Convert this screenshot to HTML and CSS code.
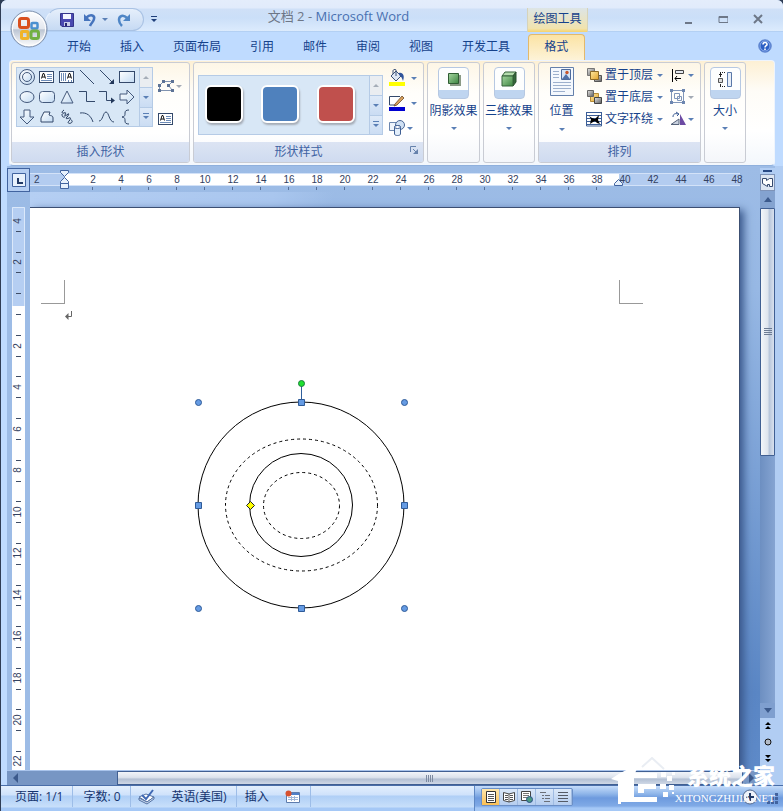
FILE: index.html
```
<!DOCTYPE html>
<html lang="zh-CN">
<head>
    <meta charset="UTF-8">
    <meta name="viewport" content="width=device-width, initial-scale=1.0">
    <title>文档 2 - Microsoft Word</title>
    <link rel="stylesheet" href="styles.css">
</head>
<body>
<svg class="defs" width="0" height="0" aria-hidden="true">
    <defs>
        <linearGradient id="shapeFill" x1="0" y1="0" x2="1" y2="1">
            <stop offset="0" stop-color="#fff"/><stop offset="1" stop-color="#c3dbf3"/>
        </linearGradient>
        <linearGradient id="green" x1="0" y1="0" x2="1" y2="1">
            <stop offset="0" stop-color="#a5d6a0"/><stop offset="1" stop-color="#3c8440"/>
        </linearGradient>
        <linearGradient id="gold" x1="0" y1="0" x2="1" y2="1">
            <stop offset="0" stop-color="#ffe9a0"/><stop offset="1" stop-color="#e2a32d"/>
        </linearGradient>
        <linearGradient id="gray" x1="0" y1="0" x2="1" y2="1">
            <stop offset="0" stop-color="#e6e6e6"/><stop offset="1" stop-color="#5c5c5c"/>
        </linearGradient>
        <linearGradient id="orb" x1="0" y1="0" x2="0" y2="1">
            <stop offset="0" stop-color="#fff"/><stop offset=".5" stop-color="#e3e7ee"/><stop offset=".52" stop-color="#bcc5d3"/><stop offset="1" stop-color="#fff"/>
        </linearGradient>
        <symbol id="textbox" viewBox="0 0 16 14">
            <rect x=".5" y="1.5" width="14" height="11" fill="#fff" stroke="#34496b"/>
            <path d="M2.500 8.500l1.500-5h1l1.500 5M3 7h3" fill="none" stroke="#111"/>
            <path d="M8 4.500h5M8 6.500h5M8 8.500h5M2 10.500h11" stroke="#6d8cb8"/>
        </symbol>
    </defs>
</svg>
<div class="window">
    <header class="titlebar">
        <button class="office-button" aria-label="Office">
            <svg width="38" height="38" viewBox="0 0 38 38">
                <circle cx="19" cy="19" r="18" fill="url(#orb)" stroke="#7c8fac"/>
                <circle cx="19" cy="19" r="16.500" fill="none" stroke="#fff"/>
                <g fill="none" stroke-width="3">
                    <rect x="9.500" y="8.500" width="9" height="9" rx="2" stroke="#d9501e"/>
                    <rect x="21.500" y="13" width="6" height="5.500" rx="1" stroke="#4a90d0" stroke-width="2.500"/>
                    <rect x="11.500" y="21.500" width="6.500" height="7" rx="1" stroke="#f0b429"/>
                    <rect x="21" y="21" width="7.500" height="7.500" rx="2" stroke="#72b043"/>
                </g>
            </svg>
        </button>
        <div class="quick-access">
            <button aria-label="保存">
                <svg width="14" height="14" viewBox="0 0 14 14"><path d="M.5.5h13v13H2l-1.500-1.500z" fill="#4a49b0" stroke="#34348a"/><path d="M3 1h8v5H3z" fill="#f4f6ff"/><path d="M4 9h6v4H4z" fill="#c9cdea"/><path d="M5 10h2v3H5z" fill="#26266e"/></svg>
            </button>
            <button class="undo" aria-label="撤消">
                <svg width="14" height="14" viewBox="0 0 14 14"><path d="M3 5c5-5 9-2 8 1-.5 3-3 4-4 7" fill="none" stroke="#4674bd" stroke-width="2.500"/><path d="M1 1v7h7z" fill="#4674bd"/></svg>
                <i class="caret"></i>
            </button>
            <button aria-label="恢复">
                <svg width="14" height="14" viewBox="0 0 14 14"><path d="M10 5c-4-4-8-2-8 2 0 2 1 4 3 6" fill="none" stroke="#4f86c6" stroke-width="2.500"/><path d="M13 1v7H6z" fill="#4f86c6"/></svg>
            </button>
        </div>
        <button class="customize" aria-label="自定义快速访问工具栏"><i class="caret bar dark"></i></button>
        <h1 class="window-title"><span>文档 2 -</span> Microsoft Word</h1>
        <div class="context-title">绘图工具</div>
        <div class="window-buttons">
            <button aria-label="最小化"><svg width="10" height="12"><path d="M2 10h7" stroke="#6d7787" stroke-width="2"/></svg></button>
            <button aria-label="最大化"><svg width="10" height="12"><path d="M1 3.500h9v6H1z" fill="none" stroke="#6d7787"/><path d="M1 4h9" stroke="#6d7787" stroke-width="2"/></svg></button>
            <button aria-label="关闭"><svg width="10" height="12"><path d="M1 2l8 8M9 2l-8 8" stroke="#6d7787" stroke-width="2"/></svg></button>
        </div>
    </header>

    <nav class="tabs">
        <a href="#">开始</a>
        <a href="#">插入</a>
        <a href="#">页面布局</a>
        <a href="#">引用</a>
        <a href="#">邮件</a>
        <a href="#">审阅</a>
        <a href="#">视图</a>
        <a href="#">开发工具</a>
        <a href="#" class="active">格式</a>
        <button class="help" aria-label="帮助">
            <svg width="14" height="14" viewBox="0 0 14 14"><circle cx="7" cy="7" r="6.300" fill="#2d5fc4" stroke="#6f92d4"/><circle cx="7" cy="7" r="5" fill="none" stroke="#bcd3fa" stroke-width=".7"/><path d="M5 5.500c0-3 4.200-2.500 4 0 0 1.200-2 1.300-2 3M7 9.500v1.500" fill="none" stroke="#fff" stroke-width="1.600"/></svg>
        </button>
    </nav>

    <div class="ribbon">
        <section class="group insert-shapes">
            <div class="group-body">
                <div class="gallery">
                    <div class="shape-grid">
                        <button aria-label="同心圆"><svg width="18" height="18"><g fill="url(#shapeFill)" stroke="#44597c"><circle cx="9" cy="9" r="7.500"/><circle cx="9" cy="9" r="4.500"/></g></svg></button>
                        <button aria-label="文本框"><svg width="16" height="14"><use href="#textbox"/></svg></button>
                        <button aria-label="竖排文本框"><svg width="16" height="14"><rect x=".5" y="1.500" width="14" height="11" fill="#fff" stroke="#34496b"/><path d="M8.500 8.500l1.500-5h1l1.500 5M9 7h3" fill="none" stroke="#111"/><path d="M2.500 3v8M4.500 3v8M6.500 3v8M9.500 10v2M12.500 10v2" stroke="#6d8cb8"/></svg></button>
                        <button aria-label="直线"><svg width="16" height="16"><path d="M1 1l14 14" stroke="#34496b"/></svg></button>
                        <button aria-label="箭头"><svg width="16" height="16"><path d="M1 1l13 13" stroke="#34496b"/><path d="M15 15h-5l5-5z" fill="#22375a"/></svg></button>
                        <button aria-label="矩形"><svg width="16" height="12"><rect x=".5" y=".5" width="15" height="11" fill="url(#shapeFill)" stroke="#34496b"/></svg></button>
                        <button aria-label="椭圆"><svg width="16" height="14"><ellipse cx="8" cy="7" rx="7" ry="5.500" fill="url(#shapeFill)" stroke="#44597c"/></svg></button>
                        <button aria-label="圆角矩形"><svg width="16" height="12"><rect x=".5" y=".5" width="15" height="11" rx="3" fill="url(#shapeFill)" stroke="#44597c"/></svg></button>
                        <button aria-label="三角形"><svg width="14" height="14"><path d="M7 1l6 12H1z" fill="url(#shapeFill)" stroke="#44597c"/></svg></button>
                        <button aria-label="肘形连接符"><svg width="16" height="14"><path d="M0 1.500h7.500v10H16" fill="none" stroke="#34496b"/></svg></button>
                        <button aria-label="肘形箭头"><svg width="16" height="14"><path d="M0 1.500h7.500v9H13" fill="none" stroke="#34496b"/><path d="M12 7.500l4 3-4 3z" fill="#22375a"/></svg></button>
                        <button aria-label="右箭头"><svg width="16" height="16"><path d="M1 5h7V1l7 7-7 7v-4H1z" fill="url(#shapeFill)" stroke="#44597c"/></svg></button>
                        <button aria-label="下箭头"><svg width="16" height="16"><path d="M5 1h6v7h4l-7 7-7-7h4z" fill="url(#shapeFill)" stroke="#44597c"/></svg></button>
                        <button aria-label="任意多边形"><svg width="16" height="14"><path d="M5 2h6l-1 3c1 1 4 0 4 3v4H2V8z" fill="url(#shapeFill)" stroke="#34496b"/></svg></button>
                        <button aria-label="自由曲线"><svg width="14" height="16"><path d="M4 1c-3 2-2 4 0 3s2 0 1 2 2 0 3-1 1 1-1 3 0 2 2 1 2 1 0 3 0 3 2 2 1-3 0-3M2 5c0 4 2 3 3 3" fill="none" stroke="#22375a"/></svg></button>
                        <button aria-label="弧形"><svg width="16" height="14"><path d="M1 3c7-1 11 3 13 9" fill="none" stroke="#34496b"/></svg></button>
                        <button aria-label="曲线"><svg width="16" height="14"><path d="M0 11c4 0 4-9 7-9s3 10 8 10" fill="none" stroke="#34496b"/></svg></button>
                        <button aria-label="左大括号"><svg width="14" height="16"><path d="M9 1C6 1 5 2 5 4c0 3 0 3-3 4 3 1 3 1 3 4 0 2 1 3 4 3" fill="none" stroke="#34496b"/></svg></button>
                    </div>
                    <div class="gallery-scroll">
                        <button disabled aria-label="上一行"><i class="caret up"></i></button>
                        <button aria-label="下一行"><i class="caret"></i></button>
                        <button aria-label="其他"><i class="caret bar"></i></button>
                    </div>
                </div>
                <div class="shape-tools">
                    <button aria-label="编辑形状"><svg width="16" height="14" viewBox="0 0 16 14"><path d="M1.500 11.500v-5l4-4h9l-4 4 4 5z" fill="none" stroke="#8093b0"/><path d="M0 10h3v3H0zM0 5h3v3H0zM4 1h3v3H4zM13 1h3v3h-3zM9 5h3v3H9zM13 10h3v3h-3z" fill="#5d7396"/></svg><i class="caret muted"></i></button>
                    <button aria-label="编辑文字"><svg width="16" height="14"><use href="#textbox"/></svg></button>
                </div>
            </div>
            <h2>插入形状</h2>
        </section>

        <section class="group shape-styles">
            <div class="group-body">
                <div class="gallery">
                    <div class="swatches">
                        <button class="swatch black" aria-label="黑色"></button>
                        <button class="swatch blue" aria-label="蓝色"></button>
                        <button class="swatch red" aria-label="红色"></button>
                    </div>
                    <div class="gallery-scroll">
                        <button disabled aria-label="上一行"><i class="caret up"></i></button>
                        <button aria-label="下一行"><i class="caret"></i></button>
                        <button aria-label="其他"><i class="caret bar"></i></button>
                    </div>
                </div>
                <div class="style-tools">
                    <button aria-label="形状填充"><svg width="18" height="18" viewBox="0 0 18 18"><path d="M3 7l5-5 5 5-5 5z" fill="#dfe8f4" stroke="#3c5277"/><path d="M8 7V1c0-1-3-1-3 1v3" fill="none" stroke="#3c5277"/><path d="M11 4c4-1 6 3 4 8-1-3-2-5-4-6z" fill="#31549b"/><path d="M1 13h16v4H1z" fill="#ff0"/></svg><i class="caret"></i></button>
                    <button aria-label="形状轮廓"><svg width="18" height="18" viewBox="0 0 18 18"><path d="M12 2.500H1.500V11H8" fill="#fff" stroke="#34496b"/><path d="M7 10l7-8 2 2-7 7-3 1z" fill="#d9a15c" stroke="#6a4a2a" stroke-width=".8"/><path d="M1 13h16v4H1z" fill="#0000d0"/></svg><i class="caret"></i></button>
                    <button class="change-shape" aria-label="更改形状"><svg width="18" height="18" viewBox="0 0 18 18"><path d="M1.500 3.500h8v8h-8z" fill="#eef4fb" stroke="#6b86af"/><circle cx="12" cy="6" r="4.500" fill="#cfe0f3" stroke="#4a6796"/><path d="M6.500 8v7c0 2 6 2 6 0V8c0-2-6-2-6 0z" fill="#e2eefb" stroke="#3f5f93"/><ellipse cx="9.500" cy="8" rx="3" ry="1.500" fill="#fff" stroke="#3f5f93"/></svg><i class="caret"></i></button>
                </div>
            </div>
            <h2>形状样式<button class="launcher" aria-label="形状样式设置"><svg width="8" height="8"><path d="M.5 6V.5H6M3 3l3 3" fill="none" stroke="#6682ac"/><path d="M8 3v5H3z" fill="#6682ac"/></svg></button></h2>
        </section>

        <section class="group shadow-effects">
            <button class="big-button">
                <span class="icon-frame"><svg width="16" height="16"><path d="M4 4h11v11H4z" fill="#8a9a86"/><path d="M2.500 2.500h10v10h-10z" fill="url(#green)" stroke="#2f5c33"/></svg></span>
                阴影效果
                <i class="caret"></i>
            </button>
        </section>

        <section class="group three-d">
            <button class="big-button">
                <span class="icon-frame"><svg width="18" height="16"><path d="M2 5l3-4h11l-3 4z" fill="#b5dcae" stroke="#35623a"/><path d="M13 5l3-4v10l-3 4z" fill="#33673a" stroke="#2b4f30"/><path d="M2 5h11v10H2z" fill="url(#green)" stroke="#35623a"/></svg></span>
                三维效果
                <i class="caret"></i>
            </button>
        </section>

        <section class="group arrange">
            <div class="group-body">
                <button class="big-button">
                    <svg width="24" height="31" viewBox="0 0 24 31"><path d="M.5.5h23v28H.5z" fill="#f4f8fd" stroke="#6480ab"/><path d="M3 4.500h6M3 7.500h6M3 10.500h6M3 15.500h18M3 18.500h18M3 21.500h18M3 24.500h12" stroke="#9db0cd"/><path d="M11.500 2.500h9v10h-9z" fill="#d5e4f6" stroke="#4d6b9c"/><path d="M12 12l4-5 4 5z" fill="#4f70a8"/><circle cx="17" cy="5.500" r="1.700" fill="#c7562e"/></svg>
                    位置
                    <i class="caret"></i>
                </button>
                <div class="arrange-list">
                    <button><svg width="16" height="16"><path d="M1.500 1.500h7v7h-7z" fill="url(#gray)" stroke="#777"/><path d="M8.500 8.500h7v6h-7z" fill="url(#gray)" stroke="#555"/><path d="M4.500 4.500h8v8h-8z" fill="url(#gold)" stroke="#8c6a28"/></svg>置于顶层<i class="caret"></i></button>
                    <button><svg width="16" height="16"><path d="M4.500 4.500h8v8h-8z" fill="url(#gold)" stroke="#b58a35"/><path d="M1.500 1.500h6v6h-6z" fill="url(#gray)" stroke="#666"/><path d="M8.500 8.500h7v6h-7z" fill="url(#gray)" stroke="#444"/></svg>置于底层<i class="caret"></i></button>
                    <button><svg width="16" height="16"><path d="M0 1.500h16M0 4.500h16M0 7.500h16M0 10.500h16M0 13.500h16" stroke="#3c5e97"/><path d="M.5 1v14h15V1" fill="none" stroke="#3c5e97"/><path d="M3 5l3 2 3 1 4-4-1 5 2 4-3-1-2-2-2 1-3 2 1-5z" fill="#000"/></svg>文字环绕<i class="caret"></i></button>
                </div>
                <div class="align-list">
                    <button aria-label="对齐"><svg width="16" height="16"><path d="M2.500 2v13" stroke="#000"/><path d="M5.500 3.500h8v3h-8z" fill="#e5e9ef" stroke="#444"/><path d="M5 11.500h6M7 9l-2 2.500L7 14" fill="none" stroke="#000"/></svg><i class="caret"></i></button>
                    <button aria-label="组合" disabled><svg width="16" height="16"><path d="M1.500 1.500h12v12h-12zM4.500 4.500h5v5h-5zM7.500 7.500h4v4h-4z" fill="none" stroke="#8096ba"/><path d="M0 0h3v3H0zM12 0h3v3h-3zM0 12h3v3H0zM12 12h3v3h-3z" fill="#6d86b0"/></svg><i class="caret muted"></i></button>
                    <button aria-label="旋转"><svg width="16" height="16"><path d="M1 13.500L9 8v5.500z" fill="#c9d1de" stroke="#56637a"/><path d="M10 3v11h6z" fill="#6d4ba3"/><path d="M3 6c0-3 2-4 5-3M6 1l3 2-2 2" fill="none" stroke="#3a5a92"/></svg><i class="caret"></i></button>
                </div>
            </div>
            <h2>排列</h2>
        </section>

        <section class="group size">
            <button class="big-button">
                <span class="icon-frame"><svg width="16" height="18"><path d="M1.500 7.500h4v4h-4z" fill="#ddd" stroke="#555"/><path d="M10.500 1.500h4v14h-4z" fill="#e7eef8" stroke="#5a78a8"/><path d="M3 1.500h6M3 15.500h6" stroke="#222" stroke-dasharray="1 1"/><path d="M3.500 1v5M3.500 13v3M2 3.500h3" stroke="#222"/></svg></span>
                大小
                <i class="caret"></i>
            </button>
        </section>
    </div>

    <div class="workspace">
        <button class="tab-selector" aria-label="制表符"><svg width="14" height="14"><path d="M.5.5h13v13H.5z" fill="#e8f1fc" stroke="#41639f"/><path d="M5 5h2v4h4v2H5z" fill="#223a66"/></svg></button>
        <div class="ruler">
            <ol>
                <li class="before">2</li>
                <li>2</li><li>4</li><li>6</li><li>8</li><li>10</li><li>12</li><li>14</li><li>16</li>
                <li>18</li><li>20</li><li>22</li><li>24</li><li>26</li><li>28</li><li>30</li><li>32</li>
                <li>34</li><li>36</li><li>38</li><li class="outside">40</li><li class="outside">42</li><li class="outside">44</li><li class="outside">46</li><li class="outside">48</li>
            </ol>
            <svg class="indent-left" width="10" height="22"><path d="M.5 1.500h8v2l-4 4-4-4zM.5 14.500v-2l4-4 4 4v2zM.5 14.500h8v5h-8z" fill="#e6f0fc" stroke="#41639f"/></svg>
            <svg class="indent-right" width="10" height="9"><path d="M.5 7.500v-2l4-4 4 4v2z" fill="#e6f0fc" stroke="#41639f"/></svg>
        </div>
        <div class="side-ruler">
            <svg width="13" height="563">
                <path d="M0 0h13v99H0z" fill="#b5cef2"/>
                <path d="M.5 99V.5h12V99" fill="none" stroke="#dbe8fa"/>
                <path d="M4 24.500h5M4 45.500h5M4 65.500h5M4 86.500h5M4 107.500h5M4 128.500h5M4 149.500h5M4 169.500h5M4 190.500h5M4 211.500h5M4 232.500h5M4 253.500h5M4 274.500h5M4 294.500h5M4 315.500h5M4 336.500h5M4 357.500h5M4 378.500h5M4 398.500h5M4 419.500h5M4 440.500h5M4 461.500h5M4 482.500h5M4 502.500h5M4 523.500h5M4 544.500h5" stroke="#3f4d66"/>
                <g class="side-numbers">
                    <text transform="translate(9 14) rotate(-90)">4</text>
                    <text transform="translate(9 55) rotate(-90)">2</text>
                    <text transform="translate(9 139) rotate(-90)">2</text>
                    <text transform="translate(9 180) rotate(-90)">4</text>
                    <text transform="translate(9 222) rotate(-90)">6</text>
                    <text transform="translate(9 263) rotate(-90)">8</text>
                    <text transform="translate(9 305) rotate(-90)">10</text>
                    <text transform="translate(9 346) rotate(-90)">12</text>
                    <text transform="translate(9 388) rotate(-90)">14</text>
                    <text transform="translate(9 429) rotate(-90)">16</text>
                    <text transform="translate(9 471) rotate(-90)">18</text>
                    <text transform="translate(9 513) rotate(-90)">20</text>
                    <text transform="translate(9 554) rotate(-90)">22</text>
                </g>
            </svg>
        </div>
        <main class="document">
            <article class="page">
                <div class="crop-marks">
                    <i class="crop left"></i>
                    <i class="crop right"></i>
                </div>
                <svg class="paragraph-mark" width="8" height="9"><path d="M6.500 0v5.500H1" fill="none" stroke="#666"/><path d="M0 5.500L3.500 2v7z" fill="#666"/></svg>
                <svg class="drawing" width="222" height="240" viewBox="0 0 222 240">
                    <g fill="none" stroke="#000">
                        <circle cx="111" cy="130" r="103"/>
                        <circle cx="111" cy="130" r="51.500"/>
                        <ellipse cx="111.500" cy="130" rx="76" ry="66" stroke-dasharray="3 3"/>
                        <ellipse cx="111.500" cy="130.500" rx="38" ry="33" stroke-dasharray="3 3"/>
                    </g>
                    <path d="M111.500 11v14" stroke="#2f5f9c"/>
                    <circle cx="111.500" cy="8.500" r="3" fill="#1fe02f" stroke="#1a7d3c"/>
                    <g fill="#659be3" stroke="#2f5b98">
                        <circle cx="8.500" cy="27.500" r="3"/>
                        <circle cx="214.500" cy="27.500" r="3"/>
                        <circle cx="8.500" cy="233.500" r="3"/>
                        <circle cx="214.500" cy="233.500" r="3"/>
                        <path d="M108.500 24.500h6v6h-6zM5.500 127.500h6v6h-6zM211.500 127.500h6v6h-6zM108.500 230.500h6v6h-6z"/>
                    </g>
                    <path d="M60.500 126.500l4 4-4 4-4-4z" fill="#ff0" stroke="#222"/>
                </svg>
            </article>
        </main>
        <div class="v-scroll">
            <i class="split-bar"></i>
            <button class="ruler-toggle" aria-label="标尺"><svg width="13" height="13"><path d="M1.500 2.500h4v2l3-2h3v8h-3v-2h-2v2l-5-3z" fill="#fff" stroke="#35496e"/></svg></button>
            <button class="scroll-up" aria-label="向上滚动"><i class="arrow-up"></i></button>
            <div class="v-track"><div class="v-thumb"><i></i><i></i><i></i><i></i></div></div>
            <button class="scroll-down" aria-label="向下滚动"><i class="arrow-down"></i></button>
            <button class="browse" aria-label="前一页"><svg width="8" height="8"><path d="M4 0l3 3H1zM4 4l3 3H1z"/></svg></button>
            <button class="browse" aria-label="选择浏览对象"><svg width="8" height="8"><circle cx="4" cy="4" r="3" fill="#b4bcc8" stroke="#111"/></svg></button>
            <button class="browse" aria-label="下一页"><svg width="8" height="8"><path d="M1 1h6L4 4zM1 5h6L4 8z"/></svg></button>
        </div>
        <div class="h-scroll">
            <button aria-label="向左滚动"><i class="arrow-left"></i></button>
            <div class="h-track"><div class="h-thumb"></div></div>
            <button aria-label="向右滚动"><i class="arrow-right"></i></button>
        </div>
    </div>

    <footer class="statusbar">
        <div class="status-info">
            <button>页面: 1/1</button>
            <button>字数: 0</button>
            <button class="proofing" aria-label="校对"><svg width="18" height="16"><path d="M1 8l7-3 8 3-7 5z" fill="#fff" stroke="#5673a3"/><path d="M1 9v2l8 4 7-5V8l-7 5z" fill="#cddcf0" stroke="#5673a3"/><path d="M4 6l4 4 7-9" fill="none" stroke="#3f68b4" stroke-width="2"/></svg></button>
            <button class="language">英语(美国)</button>
            <button class="insert-mode">插入</button>
            <button class="macro" aria-label="录制宏"><svg width="16" height="14"><path d="M1.500 2.500h13v10h-13z" fill="#fff" stroke="#5d7cad"/><path d="M2 3h12v2H2z" fill="#4f7fc8"/><path d="M3 7.500h10M3 9.500h10M6.500 6v5M9.500 6v5" stroke="#9fb6d8"/><circle cx="3.500" cy="3.500" r="3" fill="#d8512f"/></svg></button>
        </div>
        <div class="views">
            <button class="current" aria-label="页面视图"><svg width="12" height="12"><path d="M1.500.5h9v11h-9z" fill="#fff" stroke="#333"/><path d="M3 3.500h6M3 5.500h6M3 7.500h6M3 9.500h6" stroke="#555"/></svg></button>
            <button aria-label="阅读版式"><svg width="12" height="12"><path d="M.5 1.500L6 3l5.500-1.500v8L6 11 .5 9.500z" fill="#fff" stroke="#444"/><path d="M6 3v8M2 4.500h3M2 6.500h3M2 8.500h3M7 4.500h3M7 6.500h3M7 8.500h3" stroke="#555"/></svg></button>
            <button aria-label="Web 版式"><svg width="12" height="12"><path d="M.5.5h9v9h-9z" fill="#fff" stroke="#444"/><path d="M2 2.500h6M2 4.500h6M2 6.500h4" stroke="#777"/><circle cx="8.500" cy="8.500" r="3" fill="#4b9b83" stroke="#2a4f86"/></svg></button>
            <button aria-label="大纲视图"><svg width="12" height="12"><path d="M1 1.500h6M3 4.500h2M6 4.500h5M3 7.500h2M6 7.500h5M5 10.500h6" stroke="#6b7078"/></svg></button>
            <button aria-label="普通视图"><svg width="12" height="12"><path d="M1 1.500h10M1 4.500h10M1 7.500h10M1 10.500h10" stroke="#555b66"/></svg></button>
        </div>
        <button class="zoom-in" aria-label="放大"><svg width="16" height="16"><circle cx="8" cy="8" r="7" fill="#edf2fa" stroke="#53698f"/><path d="M8 4v8M4 8h8" stroke="#223a66" stroke-width="2"/></svg></button>
        <svg class="grip" width="12" height="12"><path d="M8 0h3v3H8zM4 4h3v3H4zM8 4h3v3H8zM0 8h3v3H0zM4 8h3v3H4zM8 8h3v3H8z" fill="#41639f"/></svg>
    </footer>

    <div class="watermark">
        <svg width="74" height="50" viewBox="0 0 74 50">
            <path d="M0 22Q17 10 27 10L24 16H46V21H23V40H46V45H10V47H7V24Z" fill="#fff"/>
            <path d="M27 27h18v5H33v4h-6z" fill="#fff"/>
            <path d="M31 10L41 1l12 11" fill="none" stroke="#e9edf3" stroke-width="2"/>
            <path d="M50 15h5v5h-5zM56 19h5v5h-5zM49 27h6v5h-6zM58 28h5v5h-5zM52 35h5v5h-5zM61 15h3v3h-3zM61 35h2v2h-2z" fill="#fff"/>
        </svg>
        <div class="watermark-text">
            <strong>系统之家</strong>
            <span>XITONGZHIJIA.NET</span>
        </div>
    </div>
</div>
</body>
</html>
```
FILE: styles.css
```
* {
    box-sizing: border-box;
}
body {
    margin: 0;
    background: #2f3d55;
    font-family: "Open Sans", "Noto Sans CJK SC", sans-serif;
    font-size: 12px;
    line-height: 16px;
    color: #15428b;
}
button {
    display: flex;
    align-items: center;
    justify-content: center;
    padding: 0;
    border: none;
    background: none;
    font: inherit;
    color: inherit;
}
svg {
    display: block;
    flex: none;
}
h1, h2, ol {
    margin: 0;
    padding: 0;
    font-size: 12px;
    font-weight: normal;
}
.defs {
    position: absolute;
}
.window {
    position: relative;
    display: flex;
    flex-direction: column;
    height: 100vh;
    min-height: 480px;
    margin-left: 1px;
    overflow: hidden;
    border-radius: 6px 6px 0 0;
    background: #bfdbff;
}

/* small arrows */
.caret {
    flex: none;
    width: 0;
    border: 3px solid transparent;
    border-top-color: #5a7fb5;
    border-bottom: none;
}
.caret.up {
    border-top: none;
    border-bottom: 3px solid #a5adb8;
}
.caret.muted {
    border-top-color: #a3aab5;
}
.caret.bar {
    position: relative;
}
.caret.bar::before {
    content: "";
    position: absolute;
    left: -3px;
    top: -6px;
    width: 6px;
    height: 1px;
    background: #5a7fb5;
}
.caret.dark {
    border-top-color: #1f3f7a;
}
.caret.dark::before {
    background: #1f3f7a;
}

/* title bar */
.titlebar {
    position: relative;
    display: flex;
    height: 32px;
    padding: 8px 14px 0 8px;
    background: linear-gradient(#e4edfb 0, #e1ebfb 8px, #cfe0f7 9px, #cbdff8 18px, #dcebfd 31px, #b3d0f4 31px);
}
.office-button {
    position: absolute;
    left: 9px;
    top: 10px;
    z-index: 2;
    border-radius: 50%;
}
.quick-access {
    display: flex;
    align-items: center;
    gap: 9px;
    height: 23px;
    margin-left: 36px;
    padding: 0 12px 0 14px;
    border: 1px solid #a9c2e4;
    border-left-color: #e8f1fd;
    border-radius: 16px 12px 12px 0;
    background: linear-gradient(#e6effb, #c6daf3);
}
.undo {
    gap: 5px;
}
.customize {
    width: 20px;
    height: 24px;
}
.window-title {
    flex: 1;
    padding-right: 14px;
    font-size: 13px;
    line-height: 17px;
    text-align: center;
    white-space: nowrap;
    color: #4870b0;
}
.window-title span {
    color: #6d7686;
}
.context-title {
    width: 61px;
    line-height: 22px;
    text-align: center;
    border: solid #d6d3ba;
    border-width: 0 1px;
    background: linear-gradient(#dde5e6, #f1e3ae 85%, #f6d36b);
}
.window-buttons {
    display: flex;
    justify-content: flex-end;
    gap: 25px;
    width: 181px;
    height: 22px;
    padding-right: 6px;
}

/* tabs */
.tabs {
    display: flex;
    align-items: stretch;
    height: 28px;
    padding: 2px 11px 0 51px;
}
.tabs a {
    padding: 5px 14px 0 15px;
    color: #15428b;
    text-decoration: none;
    white-space: nowrap;
}
.tabs .active {
    margin-left: 4px;
    padding: 4px 16px 0 15px;
    border: 1px solid #e3b96b;
    border-bottom: none;
    border-radius: 4px 4px 0 0;
    background: linear-gradient(#fbe3a4, #fdf3d8);
}
.help {
    margin-left: auto;
    padding-bottom: 2px;
}

/* ribbon */
.ribbon {
    display: flex;
    gap: 3px;
    height: 106px;
    margin: 0 8px;
    padding: 1px 1px 2px;
    border: 1px solid #eef4fd;
    border-bottom-color: #8fb0dd;
    border-radius: 4px;
    background: linear-gradient(#fdf0d4, #fefcf7 30px, #fff 70px, #f3f7fc);
}
.group {
    display: flex;
    flex-direction: column;
    flex: none;
    border: 1px solid #c9ccd4;
    border-radius: 3px;
    background: linear-gradient(#fdf6e6, #fffefb 30px, #fff 70px, #f4f6fa);
    overflow: hidden;
}
.group h2 {
    position: relative;
    height: 20px;
    line-height: 20px;
    text-align: center;
    color: #3f63a3;
    background: linear-gradient(#dce4f3, #cfdbf0);
}
.group-body {
    display: flex;
    flex: 1;
}
.insert-shapes {
    width: 179px;
}
.shape-styles {
    width: 231px;
}
.shape-styles h2 {
    padding-right: 20px;
}
.shadow-effects {
    width: 53px;
}
.three-d {
    width: 52px;
}
.arrange {
    width: 163px;
}
.size {
    width: 42px;
}
.gallery {
    display: flex;
    align-self: flex-start;
    height: 60px;
    margin: 4px 0 0 4px;
    border: 1px solid #b5cbe6;
    background: #d8e7f6;
}
.shape-grid {
    display: grid;
    grid-template-columns: repeat(6, 20px);
    grid-auto-rows: 20px;
    width: 122px;
    margin-top: -1px;
}
.gallery-scroll {
    width: 14px;
    height: 60px;
    margin: -1px -1px 0 auto;
    border: 1px solid #b5cbe6;
    overflow: hidden;
}
.gallery-scroll button {
    width: 12px;
    height: 20px;
    border-bottom: 1px solid #b5cbe6;
    background: linear-gradient(#dfeaf8, #cadcf3);
}
.gallery-scroll button:disabled {
    background: #eaedf1;
}
.shape-tools {
    display: flex;
    flex-direction: column;
    align-items: flex-start;
    gap: 19px;
    padding: 16px 0 0 5px;
}
.shape-tools button {
    gap: 2px;
}
.shape-styles .gallery {
    width: 185px;
    margin-top: 12px;
}
.swatches {
    display: flex;
    gap: 18px;
    padding: 9px 0 0 6px;
}
.swatch {
    width: 38px;
    height: 38px;
    border: 2px solid #fff;
    border-radius: 6px;
    box-shadow: 1px 2px 2px #a5acb6;
}
.black {
    background: #000;
}
.blue {
    background: #4f81bd;
}
.red {
    background: #c0504d;
}
.style-tools {
    display: flex;
    flex-direction: column;
    align-items: flex-start;
    gap: 7px;
    padding: 6px 0 0 5px;
}
.style-tools button {
    gap: 5px;
}
.style-tools .change-shape {
    gap: 1px;
}
.launcher {
    position: absolute;
    right: 5px;
    top: 4px;
}
.big-button {
    flex-direction: column;
    justify-content: flex-start;
    gap: 4px;
    padding-top: 4px;
    white-space: nowrap;
}
.big-button .caret {
    margin-top: 4px;
}
.icon-frame {
    display: flex;
    align-items: flex-start;
    justify-content: center;
    width: 31px;
    height: 32px;
    padding-top: 3px;
    border: 1px solid #b6c8e2;
    border-radius: 4px;
    background: linear-gradient(#fdfefe 22px, #bfd5f0 22px);
}
.arrange .big-button {
    width: 45px;
    gap: 5px;
}
.arrange-list, .align-list {
    display: flex;
    flex-direction: column;
    align-items: flex-start;
    gap: 6px;
    padding-top: 4px;
}
.arrange-list {
    margin-left: 2px;
    white-space: nowrap;
}
.align-list {
    margin-left: 7px;
}
.arrange-list button {
    gap: 3px;
}
.arrange-list .caret {
    margin-left: 1px;
}
.align-list button {
    gap: 2px;
}

/* editing area */
.workspace {
    display: grid;
    grid-template-columns: 23px 1fr 15px;
    grid-template-rows: 24px 1fr 15px;
    flex: 1;
    min-height: 0;
    padding: 2px 8px 0 0;
    margin-left: 6px;
    background: linear-gradient(to left, #b1cdf3 8px, transparent 8px), linear-gradient(#9dbce6, #97b8e4 20%, #5a86c4 85%, #5f8bc9);
}
.tab-selector {
    border: 1px solid #41639f;
    background: #b5cef2;
}
.ruler {
    position: relative;
    min-width: 0;
}
.ruler ol {
    display: flex;
    margin: 5px 20px 0 0;
    list-style: none;
    height: 13px;
    font-family: "Liberation Sans", sans-serif;
    font-size: 10px;
    line-height: 13px;
    color: #33415f;
    background: linear-gradient(to right, #b3ccf0 35px, #fff 35px, #fff 589px, #b3ccf0 589px);
    border: solid #d3e2f8;
    border-width: 1px 0;
}
.ruler li {
    position: relative;
    flex: none;
    width: 28px;
    height: 11px;
    line-height: 11px;
    text-align: center;
}
.ruler li::after {
    content: "";
    position: absolute;
    left: 13px;
    top: 13px;
    width: 1px;
    height: 3px;
    background: #566f98;
}
.ruler .before {
    width: 49px;
    padding-left: 4px;
    text-align: left;
}
.ruler .before::after, .ruler .outside::after {
    display: none;
}
.indent-left, .indent-right {
    position: absolute;
    left: 30px;
    top: 1px;
}
.indent-right {
    left: 584px;
    top: 10px;
}
.side-ruler {
    display: flex;
    min-height: 0;
    margin-top: 15px;
    padding-left: 5px;
    overflow: hidden;
    background: linear-gradient(to right, #9dbce6 5px, #fff 5px, #fff 18px, #9dbce6 18px);
}
.side-numbers {
    font-family: "Liberation Sans", sans-serif;
    font-size: 10px;
    text-anchor: middle;
    fill: #33415f;
}
.document {
    min-width: 0;
    min-height: 0;
    padding: 15px 20px 0 0;
    overflow: hidden;
    background: linear-gradient(100deg, #b5cff3 0, #a9c6ee 240px, transparent 300px);
}
.page {
    height: 100%;
    padding: 72px 96px 0 11px;
    overflow: hidden;
    border: solid #3c4f72;
    border-width: 1px 1px 0 0;
    background: #fff;
    box-shadow: 4px 3px 8px #3a588c;
}
.crop-marks {
    display: flex;
    justify-content: space-between;
}
.crop {
    width: 24px;
    height: 24px;
    border-bottom: 1px solid #999;
}
.crop.left {
    border-right: 1px solid #999;
}
.crop.right {
    border-left: 1px solid #999;
}
.paragraph-mark {
    margin: 7px 0 0 24px;
}
.drawing {
    margin: 55px 0 0 149px;
}

/* scroll bars */
.v-scroll {
    grid-column: 3;
    grid-row: 1 / 4;
    display: flex;
    flex-direction: column;
    background: #b1cdf3;
}
.split-bar {
    width: 9px;
    height: 2px;
    margin: 2px auto;
    background: #284a86;
}
.ruler-toggle {
    height: 17px;
    border: 1px solid #7e93b8;
    background: #dce5f2;
}
.scroll-up, .scroll-down {
    height: 17px;
    background: #84a3d0;
}
.scroll-down {
    height: 15px;
    background: #7f9fcf;
}
.v-track {
    flex: 1;
    min-height: 0;
    background: linear-gradient(to right, #6d8fc1, #85a4d2);
}
.v-thumb {
    display: flex;
    flex-direction: column;
    align-items: center;
    justify-content: center;
    gap: 1px;
    height: 50%;
    border: 1px solid #405f92;
    border-radius: 1px;
    background: linear-gradient(to right, #f3f6fa, #dfe5ee 50%, #b9c7dc 65%, #d9e1ee);
}
.v-thumb i {
    width: 8px;
    height: 1px;
    background: #6d7c94;
}
.browse {
    height: 16px;
}
.browse:last-child {
    margin-bottom: 19px;
}
.arrow-up, .arrow-down {
    border: 4px solid transparent;
    border-top: none;
    border-bottom: 5px solid #3c5a8c;
}
.arrow-down {
    border-top: 5px solid #3c5a8c;
    border-bottom: none;
}
.arrow-left, .arrow-right {
    border: 5px solid transparent;
    border-left: none;
    border-right: 5px solid #3c5a8c;
}
.arrow-right {
    border-left: 5px solid #3c5a8c;
    border-right: none;
}
.h-scroll {
    grid-column: 1 / 3;
    grid-row: 3;
    display: flex;
    border-top: 1px solid #a9c4ec;
    background: #7796c4;
}
.h-scroll button {
    width: 17px;
}
.h-track {
    flex: 1;
    display: flex;
    justify-content: flex-end;
}
.h-thumb {
    width: 87%;
    border: 1px solid #405f92;
    background: repeating-linear-gradient(to right, #7c8aa0 0, #7c8aa0 1px, transparent 1px, transparent 2px) center / 8px 7px no-repeat, linear-gradient(#f1f4f9, #dbe2ec 45%, #b3c0d4 60%, #cfd8e6);
}

/* status bar */
.statusbar {
    display: flex;
    align-items: center;
    height: 26px;
    padding-right: 4px;
    border-top: 1px solid #4a6ea9;
    background: linear-gradient(#c5dcfa, #8eb5e9 8px, #6d9ade 12px, #80aae6 20px, #a5c8f6 22px);
}
.status-info {
    display: flex;
    align-items: center;
    height: 25px;
    width: 474px;
    padding: 0 0 4px 4px;
    border-right: 1px solid #5f88c4;
    background: linear-gradient(#e3effd, #cfe2fb 9px, #afcff6 10px, #c8dffa 21px, #a5c8f6 22px);
    color: #15346e;
}
.status-info button {
    height: 21px;
    padding: 0 9px 0 10px;
    border-right: 1px solid #9dbde8;
    white-space: nowrap;
}
.status-info .proofing, .status-info .insert-mode {
    padding: 0 8px;
    border-right: none;
}
.status-info .proofing {
    padding-left: 7px;
}
.status-info .language, .status-info .macro {
    padding-left: 8px;
}
.views {
    display: flex;
    height: 18px;
    margin: 0 0 3px 6px;
    border: 1px solid #6b8fc6;
    border-radius: 2px;
    background: linear-gradient(#dbe8f8, #b5cdef);
}
.views button {
    width: 18px;
    border-right: 1px solid #9fbbe2;
}
.views .current {
    background: linear-gradient(#fde6ad, #f9bf56);
}
.zoom-in {
    margin: 0 9px 3px auto;
}

.watermark {
    position: absolute;
    right: 8px;
    bottom: 4px;
    display: flex;
    color: #fff;
    pointer-events: none;
}
.watermark svg {
    margin-right: -10px;
}
.watermark-text {
    display: flex;
    flex-direction: column;
    align-items: flex-end;
    padding-top: 4px;
}
.watermark strong {
    font-size: 22px;
    font-weight: 900;
    line-height: 28px;
}
.watermark span {
    font-family: "Liberation Serif", serif;
    font-size: 11px;
    line-height: 18px;
}
```
